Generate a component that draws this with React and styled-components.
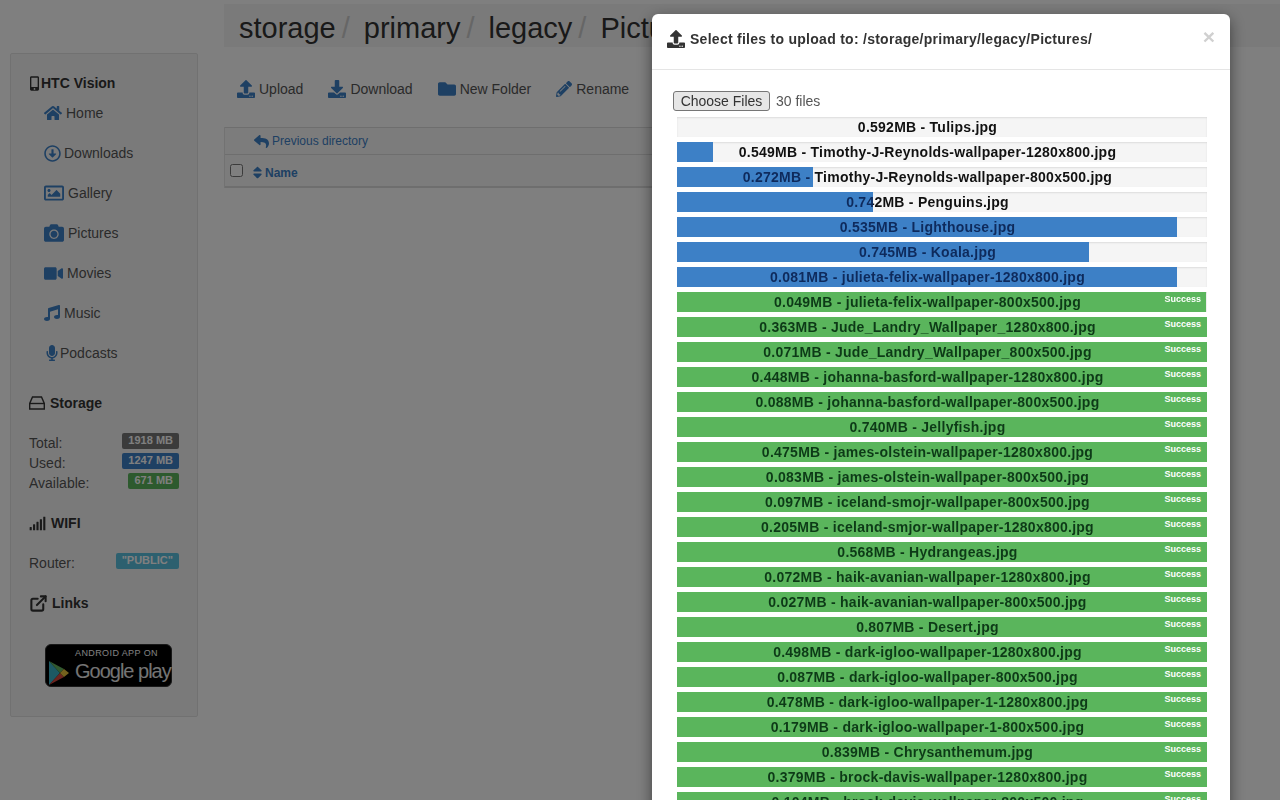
import React from 'react'
import styled, { createGlobalStyle } from 'styled-components'
import {
  FaHome, FaRegArrowAltCircleDown, FaRegImage, FaCamera, FaVideo, FaMusic, FaMicrophone,
  FaMobileAlt, FaSignal, FaUpload, FaDownload, FaFolder,
  FaPencilAlt, FaReply, FaSort,
} from 'react-icons/fa'
import { FiExternalLink } from 'react-icons/fi'

const GlobalStyle = createGlobalStyle`
    html, body {
        margin: 0;
        height: 800px;
        overflow: hidden;
        background: #fff;
        font-family: "Liberation Sans", Arial, sans-serif;
        font-size: 14px;
        color: #333;
    }
`

const Page = styled.div`
    display: flex;
    align-items: flex-start;
    height: 800px;
    overflow: hidden;
`

const Sidebar = styled.aside`
    box-sizing: border-box;
    flex: none;
    width: 188px;
    height: 664px;
    margin: 53px 0 0 10px;
    padding: 19px 18px;
    background: #f5f5f5;
    border: 1px solid #e3e3e3;
    border-radius: 2px;
`

const Heading = styled.div`
    display: flex;
    align-items: center;
    gap: ${p => p.$gap || 5}px;
    height: 20px;
    margin-top: ${p => p.$top || 0}px;
    font-weight: bold;
    color: #333;
`

const PhoneIcon = styled(FaMobileAlt)`
    width: 9px;
    height: 15px;
    margin-left: 1px;
`

const NavList = styled.div`
    display: flex;
    flex-direction: column;
    gap: 20px;
    margin-top: 10px;
    padding-left: 15px;
`

const NavItem = styled.div`
    display: flex;
    align-items: center;
    gap: ${p => p.$gap}px;
    height: 20px;
    color: #555;
    svg { color: #3d80c6; }
`

const StatList = styled.div`
    margin-top: ${p => p.$top}px;
`

const StatRow = styled.div`
    display: flex;
    justify-content: space-between;
    height: 20px;
    line-height: 20px;
    color: #555;
`

const Badge = styled.span`
    height: 16px;
    padding: 0 6px;
    font-size: 11px;
    font-weight: bold;
    line-height: 15px;
    color: #fff;
    border-radius: 2px;
    background: ${p => p.$color};
`

const PlayBadge = styled.div`
    position: relative;
    box-sizing: border-box;
    width: 127px;
    height: 43px;
    margin: 31px 0 0 16px;
    padding: 3px 0 0 29px;
    color: #fff;
    background: #000;
    border: 1px solid #333;
    border-radius: 6px;
    svg { position: absolute; left: 3px; top: 16px; }
`

const PlaySmall = styled.div`
    font-size: 9px;
    line-height: 11px;
    letter-spacing: 0.4px;
`

const PlayBig = styled.div`
    font-size: 20px;
    line-height: 24px;
    letter-spacing: -1px;
    white-space: nowrap;
    color: #e8e8e8;
`

const Main = styled.main`
    flex: 1;
    min-width: 0;
    margin-left: 26px;
`

const Breadcrumb = styled.div`
    display: flex;
    align-items: center;
    box-sizing: border-box;
    height: 43px;
    margin-top: 4px;
    padding: 5px 0 0 15px;
    background: #f5f5f5;
    font-size: 29px;
    color: #333;
    white-space: nowrap;
`

const Crumb = styled.span`
    & + &::before {
        content: "/";
        padding: 0 14px 0 6px;
        color: #ccc;
    }
`

const Toolbar = styled.div`
    display: flex;
    gap: 25px;
    height: 19px;
    margin-top: 32px;
    padding-left: 13px;
`

const ToolButton = styled.div`
    display: flex;
    align-items: center;
    gap: 4px;
    color: #555;
    svg { color: #3d80c6; }
`

const FileTable = styled.div`
    width: 900px;
    margin-top: 29px;
    font-size: 12px;
    color: #3d80c6;
    border-left: 1px solid #e4e4e4;
`

const BackRow = styled.div`
    display: flex;
    align-items: center;
    gap: 3px;
    box-sizing: border-box;
    height: 28px;
    padding-left: 29px;
    background: #f9f9f9;
    border-top: 1px solid #ddd;
    border-bottom: 1px solid #ddd;
`

const HeadRow = styled.div`
    display: flex;
    align-items: center;
    box-sizing: border-box;
    height: 33px;
    padding: 4px 0 0 5px;
    background: #f9f9f9;
    border-bottom: 2px solid #ddd;
    font-weight: bold;
`

const Check = styled.input`
    width: 13px;
    height: 13px;
    margin: 0 7px 4px 0;
`

const Backdrop = styled.div`
    position: fixed;
    inset: 0;
    background: rgba(0, 0, 0, 0.5);
`

const Modal = styled.div`
    position: absolute;
    top: 14px;
    left: 652px;
    width: 578px;
    height: 900px;
    background: #fff;
    border-radius: 6px;
    box-shadow: 0 5px 15px rgba(0, 0, 0, 0.5);
`

const ModalHeader = styled.div`
    position: relative;
    display: flex;
    align-items: center;
    gap: 5px;
    box-sizing: border-box;
    height: 56px;
    padding: 0 15px 6px;
    border-bottom: 1px solid #e5e5e5;
`

const ModalTitle = styled.div`
    font-weight: bold;
    color: #333;
    letter-spacing: 0.27px;
`

const Close = styled.span`
    position: absolute;
    top: 11px;
    right: 15px;
    font-size: 21px;
    font-weight: bold;
    line-height: 24px;
    color: #d0d0d0;
`

const ModalBody = styled.div`
    padding: 21px 23px 0 21px;
`

const FilePicker = styled.div`
    display: flex;
    align-items: center;
    gap: 6px;
    height: 20px;
    margin-bottom: 6px;
    color: #555;
`

const ChooseButton = styled.button`
    box-sizing: border-box;
    width: 97px;
    height: 20px;
    padding: 0;
    font: 14px/18px "Liberation Sans", Arial, sans-serif;
    color: #333;
    background: #e6e6e6;
    border: 1px solid #767676;
    border-radius: 3px;
`

const UploadList = styled.div`
    display: flex;
    flex-direction: column;
    gap: 5px;
    margin-left: 4px;
`

const Track = styled.div`
    position: relative;
    width: 530px;
    height: 20px;
    background: #f5f5f5;
    box-shadow: inset 0 1px 2px rgba(0, 0, 0, 0.1);
`

const Bar = styled.div`
    position: absolute;
    top: 0;
    bottom: 0;
    left: 0;
    background: ${p => (p.$done ? '#5ab55c' : '#3d80c6')};
`

const RowLabel = styled.div`
    position: relative;
    box-sizing: border-box;
    padding-right: 29px;
    font-weight: bold;
    letter-spacing: 0.25px;
    line-height: 20px;
    text-align: center;
    white-space: nowrap;
    color: transparent;
    -webkit-background-clip: text;
    background-clip: text;
`

const Success = styled.span`
    position: absolute;
    top: 2px;
    right: 6px;
    font-size: 9px;
    font-weight: bold;
    line-height: 11px;
    color: #fff;
`

const navItems = [
  { label: 'Home', Icon: FaHome, size: 18, gap: 4 },
  { label: 'Downloads', Icon: FaRegArrowAltCircleDown, size: 17, gap: 3 },
  { label: 'Gallery', Icon: FaRegImage, size: 20, gap: 4 },
  { label: 'Pictures', Icon: FaCamera, size: 20, gap: 4 },
  { label: 'Movies', Icon: FaVideo, size: 19, gap: 4 },
  { label: 'Music', Icon: FaMusic, size: 16, gap: 4 },
  { label: 'Podcasts', Icon: FaMicrophone, size: 16, gap: 0 },
]

const tools = [
  { label: 'Upload', Icon: FaUpload, size: 18 },
  { label: 'Download', Icon: FaDownload, size: 18 },
  { label: 'New Folder', Icon: FaFolder, size: 18 },
  { label: 'Rename', Icon: FaPencilAlt, size: 16 },
]

const uploads = [
  ['0.592MB - Tulips.jpg', 0],
  ['0.549MB - Timothy-J-Reynolds-wallpaper-1280x800.jpg', 36],
  ['0.272MB - Timothy-J-Reynolds-wallpaper-800x500.jpg', 136],
  ['0.742MB - Penguins.jpg', 196],
  ['0.535MB - Lighthouse.jpg', 500],
  ['0.745MB - Koala.jpg', 412],
  ['0.081MB - julieta-felix-wallpaper-1280x800.jpg', 500],
  ['0.049MB - julieta-felix-wallpaper-800x500.jpg', 529],
  ['0.363MB - Jude_Landry_Wallpaper_1280x800.jpg', 530],
  ['0.071MB - Jude_Landry_Wallpaper_800x500.jpg', 530],
  ['0.448MB - johanna-basford-wallpaper-1280x800.jpg', 530],
  ['0.088MB - johanna-basford-wallpaper-800x500.jpg', 530],
  ['0.740MB - Jellyfish.jpg', 530],
  ['0.475MB - james-olstein-wallpaper-1280x800.jpg', 530],
  ['0.083MB - james-olstein-wallpaper-800x500.jpg', 530],
  ['0.097MB - iceland-smojr-wallpaper-800x500.jpg', 530],
  ['0.205MB - iceland-smjor-wallpaper-1280x800.jpg', 530],
  ['0.568MB - Hydrangeas.jpg', 530],
  ['0.072MB - haik-avanian-wallpaper-1280x800.jpg', 530],
  ['0.027MB - haik-avanian-wallpaper-800x500.jpg', 530],
  ['0.807MB - Desert.jpg', 530],
  ['0.498MB - dark-igloo-wallpaper-1280x800.jpg', 530],
  ['0.087MB - dark-igloo-wallpaper-800x500.jpg', 530],
  ['0.478MB - dark-igloo-wallpaper-1-1280x800.jpg', 530],
  ['0.179MB - dark-igloo-wallpaper-1-800x500.jpg', 530],
  ['0.839MB - Chrysanthemum.jpg', 530],
  ['0.379MB - brock-davis-wallpaper-1280x800.jpg', 530],
  ['0.104MB - brock-davis-wallpaper-800x500.jpg', 530],
]

const UploadRow = ({ name, width }) => {
  const done = width >= 529
  const ink = done ? '#0d3a17' : '#0e2a5c'
  return (
    <Track>
      <Bar $done={done} style={{ width }} />
      <RowLabel style={{ backgroundImage: `linear-gradient(to right, ${ink} ${width}px, #111 ${width}px)` }}>
        {name}
      </RowLabel>
      {done && <Success>Success</Success>}
    </Track>
  )
}

const PlayLogo = () => (
  <svg width="20" height="24" viewBox="0 0 20 24">
    <path d="M0 0 L11 12 L0 24 Z" fill="#3bb3c9" />
    <path d="M0 0 L15 8 L11 12 Z" fill="#62b35f" />
    <path d="M0 24 L15 16 L11 12 Z" fill="#d8483f" />
    <path d="M15 8 L20 12 L15 16 L11 12 Z" fill="#e8c33b" />
  </svg>
)

// outlined drive, the fa one is too flat
const DriveIcon = () => (
  <svg width="16" height="14" viewBox="0 0 16 14" fill="none" stroke="currentColor" strokeWidth="1.4">
    <path d="M3.5 1 H12.5 L15.3 7.5 V13 H0.7 V7.5 Z" />
    <path d="M0.7 7.5 H15.3" />
  </svg>
)

const App = () => (
  <>
    <GlobalStyle />
    <Page>
      <Sidebar>
        <Heading $gap={2}><PhoneIcon />HTC Vision</Heading>
        <NavList>
          {navItems.map(({ label, Icon, size, gap }) => (
            <NavItem key={label} $gap={gap}><Icon size={size} />{label}</NavItem>
          ))}
        </NavList>
        <Heading $top={30}><DriveIcon />Storage</Heading>
        <StatList $top={20}>
          <StatRow>Total:<Badge $color="#777">1918 MB</Badge></StatRow>
          <StatRow>Used:<Badge $color="#3d80c6">1247 MB</Badge></StatRow>
          <StatRow>Available:<Badge $color="#5ab55c">671 MB</Badge></StatRow>
        </StatList>
        <Heading $top={20}><FaSignal size={17} />WIFI</Heading>
        <StatList $top={20}>
          <StatRow>Router:<Badge $color="#5bc0de">"PUBLIC"</Badge></StatRow>
        </StatList>
        <Heading $top={20} $gap={4}><FiExternalLink size={19} strokeWidth={2.6} />Links</Heading>
        <PlayBadge>
          <PlayLogo />
          <PlaySmall>ANDROID APP ON</PlaySmall>
          <PlayBig>Google play</PlayBig>
        </PlayBadge>
      </Sidebar>
      <Main>
        <Breadcrumb>
          <Crumb>storage</Crumb>
          <Crumb>primary</Crumb>
          <Crumb>legacy</Crumb>
          <Crumb>Pictures</Crumb>
        </Breadcrumb>
        <Toolbar>
          {tools.map(({ label, Icon, size }) => (
            <ToolButton key={label}><Icon size={size} />{label}</ToolButton>
          ))}
        </Toolbar>
        <FileTable>
          <BackRow><FaReply size={15} />Previous directory</BackRow>
          <HeadRow><Check type="checkbox" /><FaSort size={15} />Name</HeadRow>
        </FileTable>
      </Main>
    </Page>
    <Backdrop>
      <Modal>
        <ModalHeader>
          <FaUpload size={18} />
          <ModalTitle>Select files to upload to: /storage/primary/legacy/Pictures/</ModalTitle>
          <Close>×</Close>
        </ModalHeader>
        <ModalBody>
          <FilePicker>
            <ChooseButton>Choose Files</ChooseButton>
            <span>30 files</span>
          </FilePicker>
          <UploadList>
            {uploads.map(([name, width]) => (
              <UploadRow key={name} name={name} width={width} />
            ))}
          </UploadList>
        </ModalBody>
      </Modal>
    </Backdrop>
  </>
)

export default App
